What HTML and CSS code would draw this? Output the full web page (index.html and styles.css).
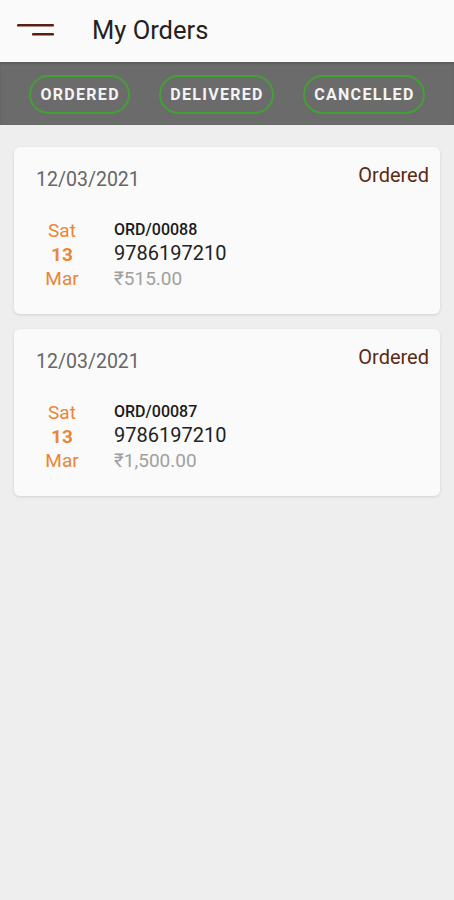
FILE: index.html
```html
<!DOCTYPE html>
<html lang="en">
  <head>
    <meta charset="UTF-8" />
    <meta name="viewport" content="width=device-width, initial-scale=1.0" />
    <title>My Orders</title>
    <link rel="stylesheet" href="styles.css">
  </head>
  <body>
    <header class="topbar">
      <svg class="menu-icon" width="40" height="16" viewBox="0 0 40 16">
        <rect x="1" y="2" width="37" height="2.6" rx="1.2" fill="#5a1f0e" />
        <rect x="16" y="11" width="22" height="2.6" rx="1.2" fill="#5a1f0e" />
      </svg>
      <h1>My Orders</h1>
    </header>

    <nav class="tabs">
      <span class="pill">ORDERED</span>
      <span class="pill">DELIVERED</span>
      <span class="pill">CANCELLED</span>
    </nav>

    <section class="orders">
      <div class="card">
        <div class="card-top">
          <span class="date">12/03/2021</span>
          <span class="status">Ordered</span>
        </div>
        <div class="card-body">
          <div class="day">
            <span>Sat</span>
            <b>13</b>
            <span>Mar</span>
          </div>
          <div class="info">
            <span class="ord-no">ORD/00088</span>
            <span class="phone">9786197210</span>
            <span class="price">₹515.00</span>
          </div>
        </div>
      </div>

      <div class="card">
        <div class="card-top">
          <span class="date">12/03/2021</span>
          <span class="status">Ordered</span>
        </div>
        <div class="card-body">
          <div class="day">
            <span>Sat</span>
            <b>13</b>
            <span>Mar</span>
          </div>
          <div class="info">
            <span class="ord-no">ORD/00087</span>
            <span class="phone">9786197210</span>
            <span class="price">₹1,500.00</span>
          </div>
        </div>
      </div>
    </section>
  </body>
</html>
```

FILE: styles.css
```css
* {
  margin: 0;
  padding: 0;
  box-sizing: border-box;
}

body {
  font-family: Roboto, "Liberation Sans", Arial, sans-serif;
  background: #eeeeee;
  min-height: 900px;
}

.topbar {
  height: 62px;
  background: #fafafa;
  display: flex;
  align-items: center;
  padding-left: 16px;
}

.menu-icon {
  margin-top: -2px;
}

.topbar h1 {
  font-size: 25.5px;
  font-weight: 400;
  color: #222;
  margin-left: 36px;
  margin-top: -2px;
}

.tabs {
  height: 63px;
  background: #6b6b6b;
  box-shadow: inset 0 2px 2px rgba(0, 0, 0, 0.15);
  display: flex;
  align-items: center;
  justify-content: space-evenly;
  padding-top: 1px;
}

.pill {
  height: 39px;
  border: 2px solid #43a035;
  border-radius: 20px;
  color: #f4f4f4;
  font-weight: 700;
  font-size: 16px;
  letter-spacing: 1.3px;
  display: flex;
  align-items: center;
  padding: 0 8px 0 9px;
}

.orders {
  padding: 22px 14px;
  display: flex;
  flex-direction: column;
  gap: 15px;
}

.card {
  background: #fafafa;
  border-radius: 6px;
  box-shadow: 0 1px 3px rgba(0, 0, 0, 0.12);
  padding: 16px 11px 21px 22px;
}

.card-top {
  display: flex;
  justify-content: space-between;
  align-items: flex-start;
}

.date {
  font-size: 19.5px;
  color: #666;
  padding-top: 5px;
}

.status {
  font-size: 20px;
  color: #5b2a14;
}

.card-body {
  display: flex;
  margin-top: 28px;
}

.day {
  width: 52px;
  display: flex;
  flex-direction: column;
  align-items: center;
  color: #ec8536;
  font-size: 19px;
  line-height: 24px;
}

.day b {
  font-weight: 700;
}

.info {
  display: flex;
  flex-direction: column;
  margin-left: 26px;
}

.ord-no {
  font-size: 16px;
  font-weight: 500;
  color: #1a1a1a;
  line-height: 22px;
}

.phone {
  font-size: 20px;
  color: #222;
  line-height: 24px;
}

.price {
  font-size: 19px;
  color: #a0a0a0;
  line-height: 28px;
}
```
